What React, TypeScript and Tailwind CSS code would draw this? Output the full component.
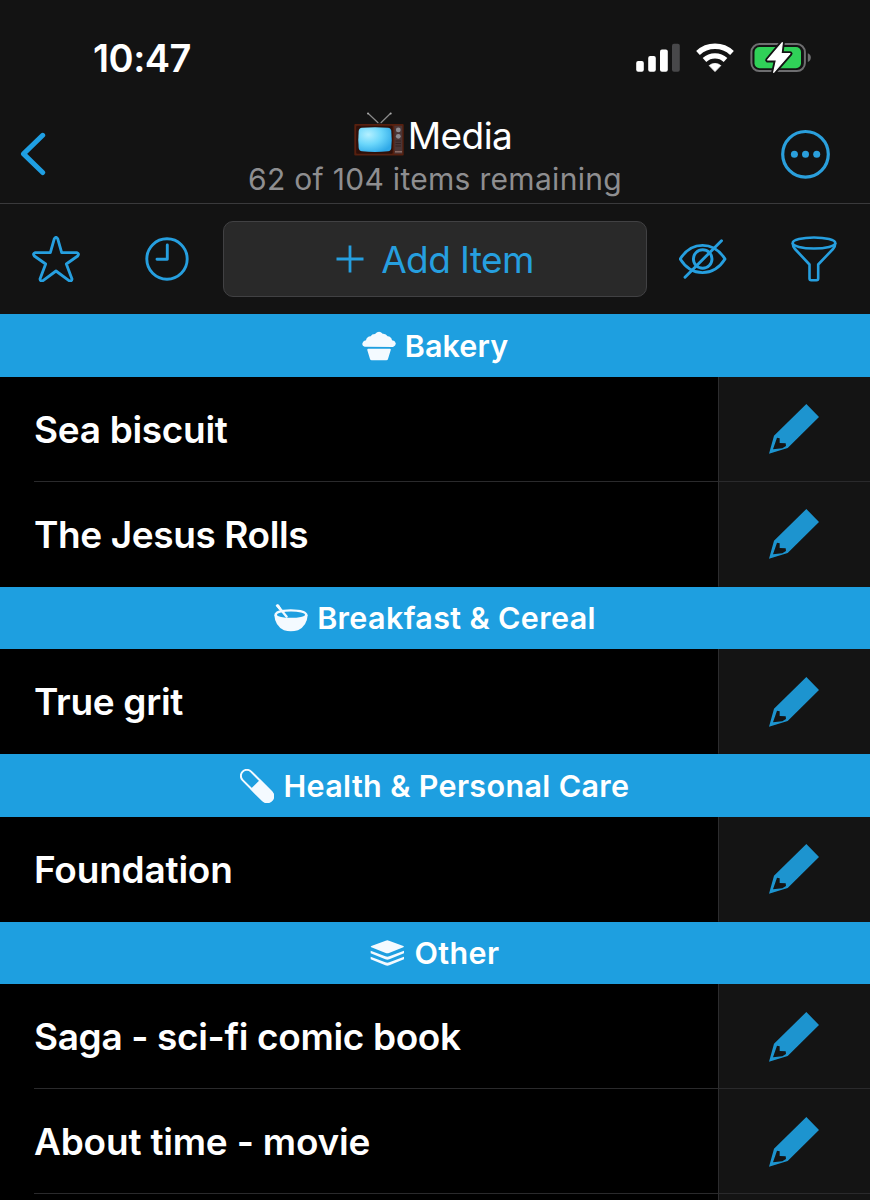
import type { ReactNode } from 'react'

interface Item {
  name: string
  tracking: string
}

interface Section {
  title: string
  tracking: string
  icon: ReactNode
  items: Item[]
}

function StatusIcons() {
  return (
    <svg width="176" height="30" viewBox="0 0 176 30" className="overflow-visible">
      <g fill="#fff">
        <rect x="0.2" y="18" width="7.6" height="10.7" rx="2" />
        <rect x="12.2" y="13" width="7.6" height="15.7" rx="2" />
        <rect x="24" y="6.5" width="7.8" height="22.2" rx="2" />
        <rect x="36" y="0.8" width="7.8" height="27.9" rx="2" fill="#48484a" />
      </g>
      <g fill="none" stroke="#fff" strokeWidth="5.4">
        <path d="M62 9.9A25 25 0 0 1 96 9.9" />
        <path d="M68.5 17A15.5 15.5 0 0 1 89.5 17" />
      </g>
      <path d="M79 28.6L73.2 22.6A8.8 8.8 0 0 1 84.8 22.6Z" fill="#fff" stroke="#fff" strokeWidth="0.8" strokeLinejoin="round" />
      <rect x="115.4" y="1.1" width="53.5" height="27" rx="8" fill="none" stroke="#6e6e70" strokeWidth="2" />
      <path d="M171.8 10.3Q174.8 11.5 174.8 14.6T171.8 19Z" fill="#6e6e70" />
      <rect x="118.5" y="4" width="46.5" height="21.3" rx="5" fill="#30d158" />
      <path
        d="M146.3 -0.3L131.7 17H140.5L137.7 29.3L154 10.7H145Z"
        fill="#fff"
        stroke="#131313"
        strokeWidth="5"
        strokeLinejoin="round"
      />
      <path d="M146.3 -0.3L131.7 17H140.5L137.7 29.3L154 10.7H145Z" fill="#fff" stroke="#fff" strokeWidth="1.2" strokeLinejoin="round" />
    </svg>
  )
}

function TvIcon() {
  return (
    <svg width="50" height="45" viewBox="0 0 50 45">
      <defs>
        <radialGradient id="screen" cx="0.3" cy="0.3" r="0.8">
          <stop offset="0" stopColor="#b4f0ff" />
          <stop offset="0.5" stopColor="#6cd7fb" />
          <stop offset="1" stopColor="#2fa9e8" />
        </radialGradient>
      </defs>
      <path d="M14 1.2L24.3 11M36.7 1.2L26.7 11" stroke="#8b8b8b" strokeWidth="1.2" />
      <circle cx="14" cy="1.5" r="1" fill="#aaa" />
      <circle cx="36.7" cy="1.5" r="1" fill="#aaa" />
      <path d="M22 12.5Q25.5 9 29 12.5Z" fill="#222" />
      <rect x="0.3" y="12" width="49.4" height="31.5" rx="1" fill="#57200f" />
      <rect x="2.2" y="13.7" width="36.5" height="28" rx="1" fill="#2e100a" />
      <path d="M8 15.8Q21 14.6 34 15.8Q37 16.2 37.3 19Q38.1 27.5 37.3 36Q37 38.9 34 39.3Q21 40.5 8 39.3Q5 38.9 4.7 36Q3.9 27.5 4.7 19Q5 16.2 8 15.8Z" fill="url(#screen)" />
      <rect x="40.3" y="13.7" width="8" height="28" fill="#4b3636" />
      <circle cx="44.3" cy="17.9" r="2.4" fill="#8d8c92" />
      <circle cx="44.3" cy="24.3" r="2.4" fill="#8d8c92" />
      <path d="M41.5 29H47M41.5 31.5H47M41.5 34H47" stroke="#352222" strokeWidth="1" />
      <rect x="41" y="39" width="7" height="1.5" fill="#8a6c66" />
    </svg>
  )
}

function StarIcon() {
  return (
    <svg width="48" height="46" viewBox="0 0 144 138" fill="none" stroke="#269fdf" strokeWidth="8.5" strokeLinejoin="round">
      <path d="M67 8Q72 0 77 8L89 50L134 50Q143 53 137 60L103 84L120 129Q119 137 111 134L72 105L33 134Q25 137 24 129L41 84L7 60Q1 53 10 50L55 50Z" />
    </svg>
  )
}

function ClockIcon() {
  return (
    <svg width="44" height="44" viewBox="0 0 44 44" fill="none" stroke="#269fdf" strokeWidth="2.9" strokeLinecap="round" strokeLinejoin="round">
      <circle cx="22" cy="22" r="20.2" />
      <path d="M22.3 8V22.3H12" />
    </svg>
  )
}

function EyeOffIcon() {
  return (
    <svg width="48" height="40" viewBox="0 0 48 40" fill="none" stroke="#269fdf" strokeWidth="2.9" strokeLinecap="round" strokeLinejoin="round">
      <path d="M1.2 20C12.5 1.8 34.5 1.8 46 20C34.5 38.2 12.5 38.2 1.2 20Z" />
      <circle cx="23.7" cy="20" r="9.3" />
      <path d="M42.5 1.7L6 38.3" />
    </svg>
  )
}

function FunnelIcon() {
  return (
    <svg width="46" height="46" viewBox="0 0 46 46" fill="none" stroke="#269fdf" strokeWidth="2.6" strokeLinejoin="round">
      <ellipse cx="23" cy="7" rx="21.3" ry="5.5" />
      <path d="M1.7 7Q1.7 10.5 4 13L18.5 28.5V42.5Q18.5 44.2 20.2 44.2H25.5Q27.2 44.2 27.2 42.5V28.5L42 13Q44.3 10.5 44.3 7" />
    </svg>
  )
}

function PencilIcon() {
  return (
    <svg width="50" height="50" viewBox="0 0 150 150">
      <path
        fillRule="evenodd"
        fill="#1d94cf"
        d="M112 0L150 39L56 132L0 149L15 95ZM24 101L12 136L40 133L51 126L50 118L32 117V103Z"
      />
    </svg>
  )
}

const cupcake = (
  <svg width="34" height="30" viewBox="0 0 102 90" fill="#f4faff">
    <path d="M8 47Q-2 44 2 35Q4 29 12 28Q14 17 26 16Q29 9 39 9Q51 -4 62 8Q72 7 77 16Q88 17 90 28Q99 29 101 36Q103 44 93 48Z" />
    <path d="M18 53H84Q88 53 86 58L78 84Q77 88 73 88H29Q25 88 24 84L16 58Q15 53 18 53Z" />
  </svg>
)

const bowl = (
  <svg width="34" height="28" viewBox="0 0 102 84">
    <path d="M1 34Q1 16 50 16T101 34Q99 66 72 79Q50 85 30 79Q3 66 1 34Z" fill="#f4faff" />
    <ellipse cx="51" cy="32" rx="42" ry="9.5" fill="#1e9fe0" />
    <path d="M11 5L38 38" stroke="#f4faff" strokeWidth="7" strokeLinecap="round" />
    <path d="M5 5Q10 -3 17 5L22 15L16 18Z" fill="#f4faff" />
  </svg>
)

const pill = (
  <svg width="34" height="34" viewBox="0 0 102 102">
    <g transform="rotate(45 51 51)">
      <rect x="-10" y="33" width="122" height="36" rx="18" fill="none" stroke="#f4faff" strokeWidth="6" />
      <path d="M44 30H94A21 21 0 0 1 94 72H44Z" fill="#f4faff" />
    </g>
  </svg>
)

const layers = (
  <svg width="35" height="26" viewBox="0 0 105 78" fill="#f4faff">
    <path d="M47 2Q52 0 57 2L100 18Q104 20 100 22L57 39Q52 41 47 39L4 22Q0 20 4 18Z" />
    <path d="M2 32L46 49Q52 51 58 49L102 32V40L58 58Q52 60 46 58L2 40Z" />
    <path d="M2 50L46 67Q52 69 58 67L102 50V58L58 76Q52 78 46 76L2 58Z" />
  </svg>
)

const SECTIONS: Section[] = [
  {
    title: 'Bakery',
    tracking: 'tracking-[0.1px]',
    icon: cupcake,
    items: [
      { name: 'Sea biscuit', tracking: 'tracking-[-0.3px]' },
      { name: 'The Jesus Rolls', tracking: 'tracking-[-0.4px]' },
    ],
  },
  {
    title: 'Breakfast & Cereal',
    tracking: 'tracking-[0.35px]',
    icon: bowl,
    items: [{ name: 'True grit', tracking: 'tracking-[-0.3px]' }],
  },
  {
    title: 'Health & Personal Care',
    tracking: 'tracking-[0.35px]',
    icon: pill,
    items: [{ name: 'Foundation', tracking: 'tracking-[-0.2px]' }],
  },
  {
    title: 'Other',
    tracking: 'tracking-[0.4px]',
    icon: layers,
    items: [
      { name: 'Saga - sci-fi comic book', tracking: 'tracking-[-0.35px]' },
      { name: 'About time - movie', tracking: 'tracking-[-0.2px]' },
    ],
  },
]

function ItemRow({ item, last }: { item: Item; last: boolean }) {
  return (
    <div className="flex h-[105px] shrink-0 bg-black">
      <div className="w-[34px]" />
      <div className={`flex flex-1 items-center border-b pt-px ${last ? 'border-black' : 'border-[#2a2a2c]'}`}>
        <span className={`whitespace-nowrap text-[37px] leading-none font-semibold text-white ${item.tracking}`}>{item.name}</span>
      </div>
      <button className={`flex w-[152px] items-center justify-center border-b border-l border-l-[#2c2c2e] bg-[#141414] pt-px pr-px ${last ? 'border-b-[#141414]' : 'border-b-[#2a2a2c]'}`}>
        <PencilIcon />
      </button>
    </div>
  )
}

export default function App() {
  return (
    <div className="flex h-[1200px] w-[870px] flex-col overflow-hidden bg-[#131313] font-['Inter',sans-serif]">
      <div className="flex h-[110px] shrink-0 items-start justify-between pr-[58px] pl-[93px]">
        <span className="mt-[39px] text-[38px] leading-[38px] font-semibold tracking-[-0.5px] text-white">10:47</span>
        <div className="mt-[43px]">
          <StatusIcons />
        </div>
      </div>

      <div className="flex h-[94px] shrink-0 justify-between border-b border-[#3a3a3c] px-5">
        <button className="mt-[22px] h-[44px] w-[70px]">
          <svg width="26" height="44" viewBox="0 0 26 44" fill="none" stroke="#1f9fe3" strokeWidth="5" strokeLinecap="round" strokeLinejoin="round">
            <path d="M22.7 3.3L3.5 21.9L22.7 40.5" />
          </svg>
        </button>
        <div className="flex flex-col items-center">
          <div className="flex h-[49px] items-start gap-1 pt-0.5 pr-1">
            <TvIcon />
            <span className="mt-[5px] text-[37px] leading-[38px] tracking-[-0.6px] text-white">Media</span>
          </div>
          <span className="mt-1 text-[30px] leading-[32px] tracking-[0.3px] whitespace-nowrap text-[#8e8e90]">62 of 104 items remaining</span>
        </div>
        <button className="mt-[19px] flex h-[50px] w-[70px]">
          <svg width="50" height="50" viewBox="0 0 50 50">
            <circle cx="25.5" cy="25.3" r="22.8" fill="none" stroke="#2a9fdc" strokeWidth="3.2" />
            <g fill="#2a9fdc">
              <circle cx="14.4" cy="25.3" r="3.5" />
              <circle cx="25.5" cy="25.3" r="3.5" />
              <circle cx="36.7" cy="25.3" r="3.5" />
            </g>
          </svg>
        </button>
      </div>

      <div className="grid h-[110px] shrink-0 grid-cols-[111.5px_111.5px_424px_111.5px_111.5px] items-center justify-items-center">
        <StarIcon />
        <ClockIcon />
        <button className="flex h-[76px] w-full items-center justify-center gap-[17px] rounded-[10px] border border-[#414143] bg-[#292929]">
          <svg width="28" height="28" viewBox="0 0 28 28" stroke="#269fdf" strokeWidth="2.8">
            <path d="M14 0.5V27.5M0.5 14H27.5" />
          </svg>
          <span className="pt-px text-[37px] leading-none font-normal tracking-[-0.6px] text-[#269fdf]">Add Item</span>
        </button>
        <EyeOffIcon />
        <FunnelIcon />
      </div>

      {SECTIONS.map((section) => (
        <div key={section.title} className="shrink-0">
          <div className="flex h-[62.5px] items-center justify-center gap-[9px] bg-[#1e9fe0] pt-px text-white">
            {section.icon}
            <span className={`whitespace-nowrap text-[30.5px] leading-none font-semibold ${section.tracking}`}>{section.title}</span>
          </div>
          {section.items.map((item, i) => (
            <ItemRow key={item.name} item={item} last={i === section.items.length - 1 && section.title !== 'Other'} />
          ))}
        </div>
      ))}

      <div className="flex h-[6px] shrink-0 bg-black">
        <div className="flex-1" />
        <div className="w-[152px] border-l border-[#2c2c2e] bg-[#141414]" />
      </div>
    </div>
  )
}
